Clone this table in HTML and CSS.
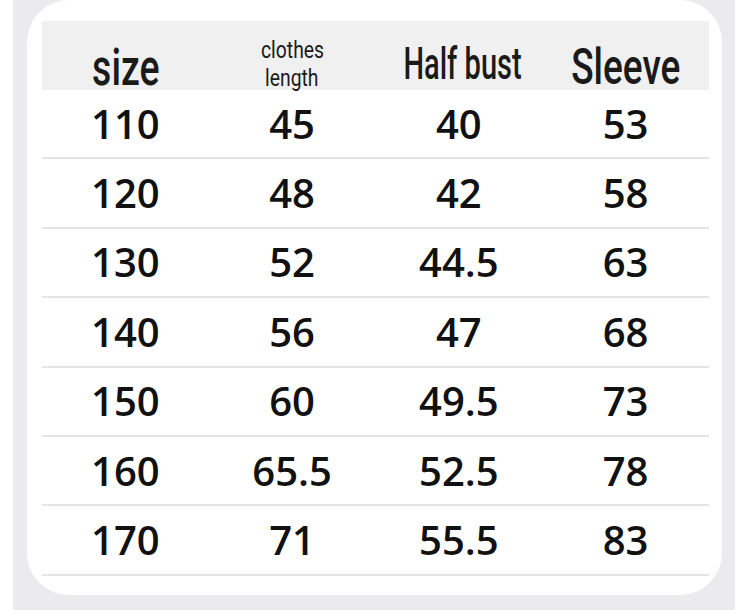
FILE: index.html
```html
<!DOCTYPE html>
<html>
<head>
<meta charset="utf-8">
<link rel="stylesheet" href="styles.css">
</head>
<body>
<div class="frame">
  <div class="card">
    <div class="table">
      <div class="head">
        <div class="hcell"><span class="h h-size">size</span></div>
        <div class="hcell hcell-small"><span class="h h-small">clothes</span><span class="h h-small">length</span></div>
        <div class="hcell"><span class="h h-bust">Half bust</span></div>
        <div class="hcell"><span class="h h-sleeve">Sleeve</span></div>
      </div>
      <div class="row"><span>110</span><span>45</span><span>40</span><span>53</span></div>
      <div class="row"><span>120</span><span>48</span><span>42</span><span>58</span></div>
      <div class="row"><span>130</span><span>52</span><span>44.5</span><span>63</span></div>
      <div class="row"><span>140</span><span>56</span><span>47</span><span>68</span></div>
      <div class="row"><span>150</span><span>60</span><span>49.5</span><span>73</span></div>
      <div class="row"><span>160</span><span>65.5</span><span>52.5</span><span>78</span></div>
      <div class="row"><span>170</span><span>71</span><span>55.5</span><span>83</span></div>
    </div>
  </div>
</div>
</body>
</html>
```

FILE: styles.css
```css
html, body {
  margin: 0;
  padding: 0;
  background: #ffffff;
}

.frame {
  width: 722px;
  height: 610px;
  margin-left: 13px;
  background: #ebebed;
  padding: 0 13px 15px 14px;
  box-sizing: border-box;
}

.card {
  height: 595px;
  background: #ffffff;
  border-radius: 42px;
  padding: 21px 13px 0 15px;
  box-sizing: border-box;
}

.table {
  display: flex;
  flex-direction: column;
}

.head {
  height: 69px;
  background: #f0f0f0;
  display: grid;
  grid-template-columns: repeat(4, minmax(0, 1fr));
}

.hcell {
  display: flex;
  flex-direction: column;
  align-items: center;
  padding-top: 21px;
  box-sizing: border-box;
  min-width: 0;
}

.hcell-small {
  padding-top: 16px;
}

.h {
  display: inline-block;
  font-family: Roboto, "Liberation Sans", sans-serif;
  font-weight: 500;
  color: #1a1a1a;
  line-height: 1;
  white-space: nowrap;
}

.h-size {
  font-size: 52px;
  transform: scaleX(0.72);
}

.h-bust {
  font-size: 44px;
  transform: scaleX(0.66);
  margin-left: 8px;
}

.h-sleeve {
  font-size: 50px;
  transform: scaleX(0.74);
}

.h-small {
  font-size: 23px;
  line-height: 28px;
  font-weight: 400;
  transform: scaleX(0.84);
}

.row {
  height: 69.4px;
  box-sizing: border-box;
  border-bottom: 2px solid #e4e4e4;
  display: grid;
  grid-template-columns: repeat(4, minmax(0, 1fr));
  align-items: center;
  font-family: "Open Sans", "Noto Sans", sans-serif;
  font-weight: 600;
  font-size: 40px;
  color: #111111;
}

.row span {
  text-align: center;
  line-height: 1;
}
```
